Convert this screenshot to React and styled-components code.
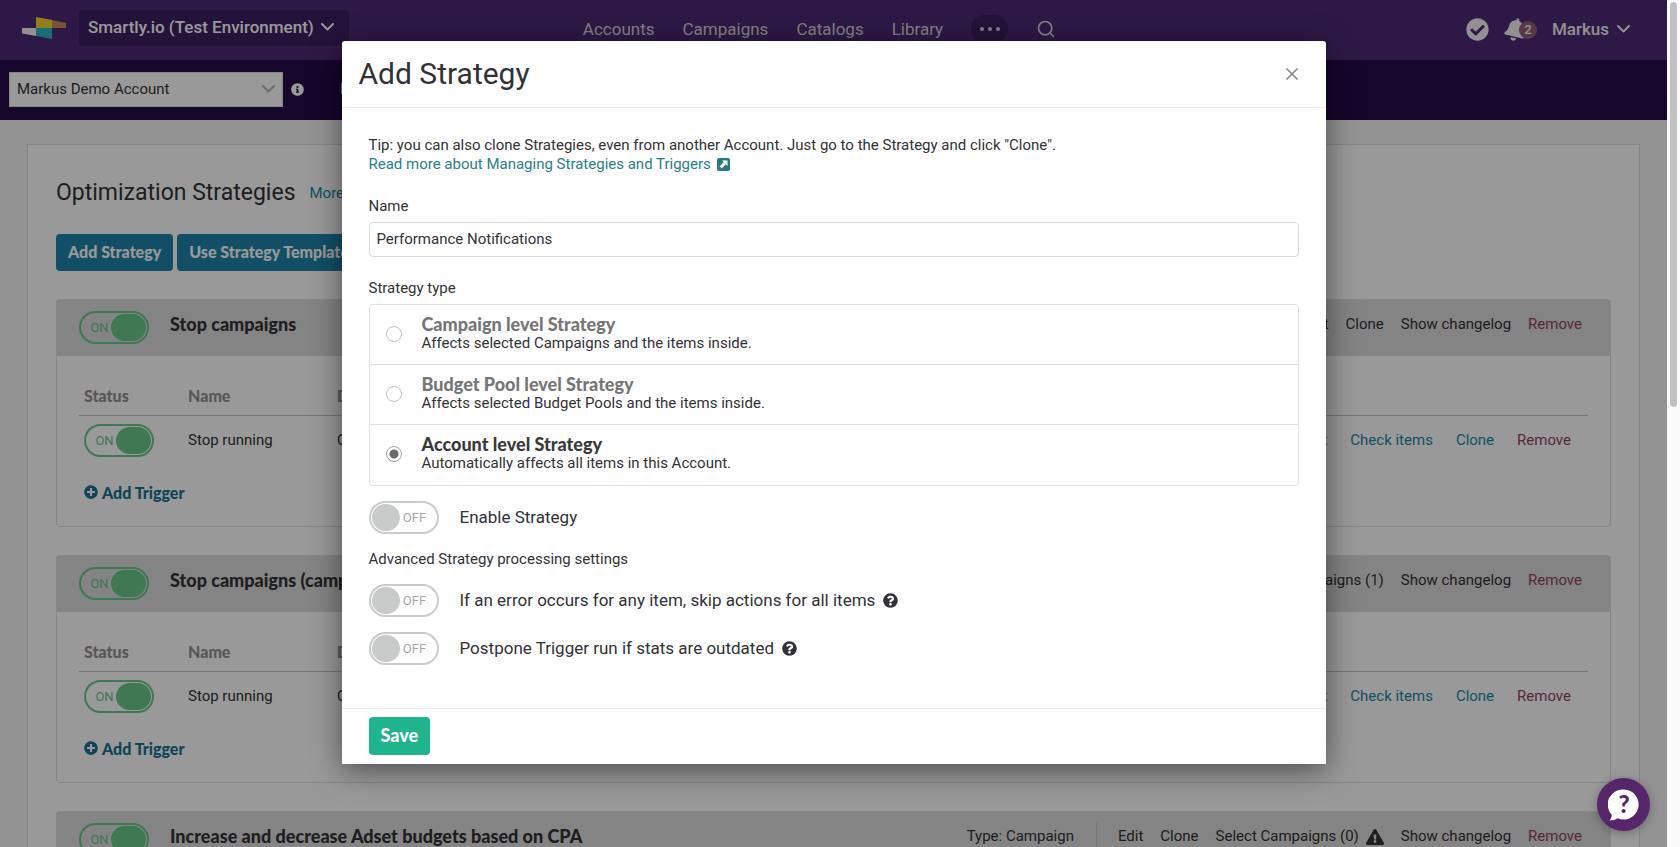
import React, { useState } from 'react';
import styled, { createGlobalStyle, css } from 'styled-components';
import {
  FaBell,
  FaCheckCircle,
  FaExclamationTriangle,
  FaInfoCircle,
  FaPlusCircle,
  FaQuestionCircle,
} from 'react-icons/fa';
import { Search, X } from 'lucide-react';

const color = {
  nav: '#4e2a75',
  navDeep: '#3c1e62',
  subnav: '#260a48',
  page: '#f5f5f5',
  text: '#323236',
  muted: '#948e95',
  teal: '#1787a6',
  tealDark: '#17728f',
  green: '#69c989',
  remove: '#93435f',
  line: '#dedede',
};

const body = "Roboto, 'Liberation Sans', sans-serif";
const strong = "Lato, Roboto, 'Liberation Sans', sans-serif";

const GlobalStyle = createGlobalStyle`
  *, *::before, *::after { box-sizing: border-box; }
  body {
    margin: 0;
    font-family: ${body};
    font-size: 15px;
    line-height: 19px;
    color: ${color.text};
  }
  button, input, select { font: inherit; color: inherit; }
  a { text-decoration: none; color: inherit; }
  h1, h2, h3, p { margin: 0; }
`;

const Shell = styled.div`
  display: flex;
  height: 100vh;
  overflow: hidden;
`;

const Viewport = styled.div`
  position: relative;
  flex: 1;
  min-width: 0;
  overflow: hidden;
  background: ${color.page};
`;

const ScrollTrack = styled.div`
  flex: none;
  width: 13px;
  padding: 2px 3px;
  background: #fafafa;
`;

const ScrollThumb = styled.div`
  width: 7px;
  height: 48%;
  border-radius: 4px;
  background: #c1c1c1;
`;

/* Top navigation */

const TopBar = styled.header`
  display: grid;
  grid-template-columns: 1fr auto 1fr;
  align-items: center;
  height: 60px;
  padding: 0 37px 4px 22px;
  background: ${color.nav};
  color: #fff;
  font-size: 17px;
  font-weight: 500;
`;

const Brand = styled.div`
  display: flex;
  align-items: center;
  gap: 13px;
`;

const EnvironmentButton = styled.button`
  display: flex;
  align-items: center;
  gap: 7px;
  height: 36px;
  padding: 0 15px 2px 9px;
  border: 0;
  border-radius: 2px;
  background: ${color.navDeep};
  white-space: nowrap;
`;

const MainNav = styled.nav`
  display: flex;
  align-items: center;
  gap: 28px;
  padding: 2px 13px 0 0;
  color: #dcd6e0;
  font-weight: 400;
`;

const MoreButton = styled.button`
  display: flex;
  align-items: center;
  justify-content: center;
  gap: 4px;
  width: 37px;
  height: 28px;
  padding: 0;
  border: 0;
  border-radius: 14px;
  background: ${color.navDeep};
`;

const Dot = styled.span`
  width: 4px;
  height: 4px;
  border-radius: 50%;
  background: #dcd6e0;
`;

const IconButton = styled.button`
  display: inline-flex;
  align-items: center;
  padding: 0;
  border: 0;
  background: none;
`;

const UserArea = styled.div`
  display: flex;
  align-items: center;
  justify-content: flex-end;
  gap: 15px;
  padding-top: 2px;
  color: #f4f0f6;
`;

const BellButton = styled(IconButton)`
  position: relative;
  width: 33px;

  svg { transform: rotate(14deg); }
`;

const Badge = styled.span`
  position: absolute;
  right: 0;
  top: 3px;
  width: 18px;
  height: 18px;
  border-radius: 50%;
  background: #8f5f72;
  font-size: 13px;
  line-height: 18px;
  text-align: center;
`;

const UserButton = styled(IconButton)`
  gap: 8px;
`;

const SubBar = styled.div`
  display: flex;
  align-items: center;
  height: 60px;
  padding: 0 9px 2px;
  gap: 8px;
  background: ${color.subnav};
  color: #fff;
`;

const SelectWrap = styled.div`
  display: grid;
  align-items: center;
  width: 274px;
  background: #fff;
  color: ${color.text};

  > * { grid-area: 1 / 1; }
  > svg { justify-self: end; margin-right: 8px; color: #b4b4b4; pointer-events: none; }
`;

const AccountSelect = styled.select`
  width: 100%;
  height: 35px;
  padding: 0 30px 0 7px;
  border: 1px solid ${color.line};
  border-radius: 0;
  background: transparent;
  appearance: none;
`;

const SubLink = styled.a`
  margin-left: 28px;
`;

/* Strategy list */

const Panel = styled.main`
  margin: 24px 27px;
  padding: 31px 28px;
  border: 1px solid ${color.line};
  background: #fff;
`;

const PageHeading = styled.div`
  display: flex;
  align-items: center;
  gap: 14px;
  height: 34px;
`;

const PageTitle = styled.h1`
  font-size: 23px;
  line-height: 34px;
  font-weight: 400;
`;

const Link = styled.a`
  color: ${(p) => (p.$danger ? color.remove : color.teal)};
`;

const ButtonRow = styled.div`
  display: flex;
  gap: 4px;
  margin: 24px 0 28px;
`;

const Button = styled.button`
  height: ${(p) => (p.$primary ? '38px' : '37px')};
  padding: 0 12px 2px;
  border: 0;
  border-radius: 4px;
  background: ${(p) => (p.$primary ? '#1fb48e' : '#1e84aa')};
  color: #fff;
  font-family: ${strong};
  font-size: ${(p) => (p.$primary ? '18px' : '16px')};
  font-weight: 900;
`;

const Card = styled.section`
  margin-bottom: 28px;
  border: 1px solid ${color.line};
  border-radius: 4px;
`;

const CardHeader = styled.header`
  display: flex;
  align-items: center;
  height: 56px;
  padding: 0 28px 2px 22px;
  background: #dcdcdc;
`;

const CardTitle = styled.h2`
  flex: 1;
  margin: 0 0 6px 21px;
  font-family: ${strong};
  font-size: 18px;
  font-weight: 900;
`;

const CardActions = styled.div`
  display: flex;
  align-items: center;
  gap: 17px;
  margin-bottom: 5px;
  white-space: nowrap;
`;

const StrategyScope = styled.span`
  padding: 5px 22px 5px 0;
  margin-right: 4px;
  border-right: 1px solid #c6c6c6;
`;

const ActionLink = styled.a`
  display: inline-flex;
  align-items: center;
  gap: 7px;
  color: ${(p) => (p.$danger ? color.remove : color.text)};
`;

const CardBody = styled.div`
  padding: 19px 22px;
`;

const TriggerTable = styled.table`
  width: 100%;
  border-collapse: collapse;
  table-layout: fixed;

  th, td { padding: 0 5px; text-align: left; }
  th {
    height: 40px;
    padding-top: 2px;
    border-bottom: 1px solid #c4c4c4;
    color: ${color.muted};
    font-family: ${strong};
    font-size: 16px;
    font-weight: 900;
  }
  td { height: 50px; }
`;

const Column = styled.col`
  width: ${(p) => p.$width};
`;

const RowActions = styled.div`
  display: flex;
  justify-content: flex-end;
  gap: 23px;
  padding-right: 12px;
`;

const AddTrigger = styled.button`
  display: flex;
  align-items: center;
  gap: 4px;
  height: 30px;
  margin: 12px 0 0 5px;
  padding: 0;
  border: 0;
  background: none;
  color: ${color.tealDark};
  font-family: ${strong};
  font-size: 16px;
  font-weight: 900;
`;

/* Switch */

const SwitchBox = styled.span`
  position: relative;
  display: inline-flex;
  align-items: center;
  flex: none;
  width: 70px;
  height: 33px;
  padding: 0 1px;
  border: 2px solid ${(p) => (p.$on ? color.green : '#c9cccc')};
  border-radius: 17px;
  background: ${(p) => (p.$on ? 'transparent' : '#fff')};
  color: ${(p) => (p.$on ? color.green : '#a6a9a9')};
  font-size: 13px;
  vertical-align: middle;
`;

const SwitchInput = styled.input`
  position: absolute;
  inset: 0;
  width: 100%;
  height: 100%;
  margin: 0;
  opacity: 0;
  cursor: pointer;
`;

const SwitchKnob = styled.span`
  height: 27px;
  border-radius: 14px;
  ${(p) =>
    p.$on
      ? css`
          order: 2;
          width: 35px;
          background: ${color.green};
        `
      : css`
          width: 28px;
          background: #c9cbcb;
        `}
`;

const SwitchText = styled.span`
  flex: 1;
  text-align: center;
  padding: ${(p) => (p.$on ? '0 0 0 6px' : '0 6px 0 0')};
`;

/* Modal */

const Overlay = styled.div`
  position: absolute;
  inset: 0;
  padding: 41px 20px;
  background: rgba(0, 0, 0, 0.4);
`;

const Dialog = styled.form`
  max-width: 984px;
  margin: 0 auto;
  border-radius: 3px 3px 0 0;
  background: #fff;
  box-shadow: 0 6px 30px rgba(0, 0, 0, 0.5);
`;

const DialogHeader = styled.header`
  display: flex;
  align-items: center;
  justify-content: space-between;
  height: 67px;
  padding: 0 24px 0 17px;
  border-bottom: 1px solid #ececec;

  button { color: #858585; }
`;

const DialogTitle = styled.h2`
  font-size: 30px;
  line-height: 36px;
  font-weight: 400;
`;

const DialogBody = styled.div`
  padding: 28px 27px 43px;
`;

const DocsLink = styled.a`
  display: inline-flex;
  align-items: center;
  gap: 6px;
  color: #2a8088;
`;

const Field = styled.div`
  display: flex;
  flex-direction: column;
  gap: 6px;
  margin-top: 23px;
`;

const TextInput = styled.input`
  height: 35px;
  padding: 0 7px 2px;
  border: 1px solid #d9dcdc;
  border-radius: 4px;
  background: #fff;
`;

const TypeGroup = styled.fieldset`
  margin: 22px 0 15px;
  padding: 0;
  border: 0;
`;

const TypeLegend = styled.legend`
  padding: 0;
  margin-bottom: 6px;
`;

const TypeList = styled.div`
  padding-bottom: 1px;
  border: 1px solid #e0e2e2;
  border-radius: 4px;
`;

const TypeOption = styled.label`
  display: flex;
  align-items: center;
  gap: 20px;
  padding: 10px 16px 11px;

  & + & { border-top: 1px solid #e0e2e2; }
`;

const Radio = styled.input`
  appearance: none;
  width: 16px;
  height: 16px;
  margin: 0;
  border: 1px solid #c2c2c2;
  border-radius: 50%;
  background: #fff;

  &:checked {
    border-color: #a5a5a5;
    background: radial-gradient(circle, #6b6b6b 0 4px, #fff 5px);
  }
`;

const TypeText = styled.span`
  display: flex;
  flex-direction: column;
`;

const TypeName = styled.strong`
  color: ${(p) => (p.$active ? '#3a3a3c' : '#767676')};
  font-family: ${strong};
  font-size: 18px;
  font-weight: 900;
`;

const SwitchRow = styled.div`
  display: flex;
  align-items: center;
  gap: 21px;
  margin-bottom: 15px;
  font-size: 17px;

  &:last-child { margin-bottom: 0; }
`;

const RowLabel = styled.span`
  display: inline-flex;
  align-items: center;
  gap: 8px;
`;

const SectionLabel = styled.h3`
  margin: 16px 0 15px;
  font-size: 15px;
  font-weight: 400;
`;

const DialogFooter = styled.footer`
  padding: 8px 27px 9px;
  border-top: 1px solid #ececec;
`;

const HelpButton = styled.button`
  position: absolute;
  right: 17px;
  bottom: 16px;
  display: grid;
  place-items: center;
  width: 53px;
  height: 53px;
  padding: 0;
  border: 0;
  border-radius: 50%;
  background: #56266a;
  box-shadow: 0 2px 10px rgba(0, 0, 0, 0.3);
`;

function Logo() {
  return (
    <svg width="44" height="24" viewBox="0 0 44 24" aria-label="Smartly.io">
      <path d="M14 1l16 3v8H14z" fill="#f3d433" />
      <path d="M30 4l14 3v5H30z" fill="#cf8a50" />
      <path d="M0 12h14v8L0 17.500z" fill="#f2f2f2" />
      <path d="M14 12h16v11l-16-3z" fill="#30b4c4" />
    </svg>
  );
}

function Chevron() {
  return (
    <svg width="13" height="8" viewBox="0 0 13 8" fill="none" aria-hidden="true">
      <path
        d="M1 1l5.500 5.500L12 1"
        stroke="currentColor"
        strokeWidth="2"
        strokeLinecap="round"
        strokeLinejoin="round"
      />
    </svg>
  );
}

function ExternalIcon() {
  return (
    <svg width="13" height="13" viewBox="0 0 13 13" aria-hidden="true">
      <rect width="13" height="13" rx="2" fill="#2a7a84" />
      <path d="M5 2.500h5.500v5.500L8.800 6.300 4.600 10.500 2.500 8.400l4.200-4.200z" fill="#fff" />
    </svg>
  );
}

function Switch({ label, id, defaultOn = false }) {
  const [on, setOn] = useState(defaultOn);
  return (
    <SwitchBox $on={on}>
      <SwitchKnob $on={on} />
      <SwitchText $on={on}>{on ? 'ON' : 'OFF'}</SwitchText>
      <SwitchInput
        id={id}
        type="checkbox"
        role="switch"
        aria-label={label}
        checked={on}
        onChange={(e) => setOn(e.target.checked)}
      />
    </SwitchBox>
  );
}

function StrategyCard({ title, scope, campaigns, warning }) {
  return (
    <Card>
      <CardHeader>
        <Switch label={title} defaultOn />
        <CardTitle>{title}</CardTitle>
        <CardActions>
          <StrategyScope>Type: {scope}</StrategyScope>
          <ActionLink href="#edit">Edit</ActionLink>
          <ActionLink href="#clone">Clone</ActionLink>
          {campaigns !== undefined && (
            <ActionLink href="#campaigns">
              Select Campaigns ({campaigns})
              {warning && <FaExclamationTriangle size={18} />}
            </ActionLink>
          )}
          <ActionLink href="#changelog">Show changelog</ActionLink>
          <ActionLink href="#remove" $danger>Remove</ActionLink>
        </CardActions>
      </CardHeader>
      <CardBody>
        <TriggerTable>
          <colgroup>
            <Column $width="104px" />
            <Column $width="149px" />
            <Column $width="auto" />
            <Column $width="360px" />
          </colgroup>
          <thead>
            <tr>
              <th>Status</th>
              <th>Name</th>
              <th>Description</th>
              <th aria-label="Actions" />
            </tr>
          </thead>
          <tbody>
            <tr>
              <td><Switch label="Stop running" defaultOn /></td>
              <td>Stop running</td>
              <td>Conditions</td>
              <td>
                <RowActions>
                  <Link href="#edit">Edit</Link>
                  <Link href="#check">Check items</Link>
                  <Link href="#clone">Clone</Link>
                  <Link href="#remove" $danger>Remove</Link>
                </RowActions>
              </td>
            </tr>
          </tbody>
        </TriggerTable>
        <AddTrigger type="button">
          <FaPlusCircle size={14} />
          Add Trigger
        </AddTrigger>
      </CardBody>
    </Card>
  );
}

const strategies = [
  { title: 'Stop campaigns', scope: 'Account' },
  { title: 'Stop campaigns (campaign level)', scope: 'Campaign', campaigns: 1 },
  {
    title: 'Increase and decrease Adset budgets based on CPA',
    scope: 'Campaign',
    campaigns: 0,
    warning: true,
  },
];

const strategyTypes = [
  { id: 'campaign', name: 'Campaign level Strategy', text: 'Affects selected Campaigns and the items inside.' },
  { id: 'pool', name: 'Budget Pool level Strategy', text: 'Affects selected Budget Pools and the items inside.' },
  { id: 'account', name: 'Account level Strategy', text: 'Automatically affects all items in this Account.' },
];

function AddStrategyDialog() {
  const [name, setName] = useState('Performance Notifications');
  const [type, setType] = useState('account');
  return (
    <Dialog role="dialog" aria-label="Add Strategy" onSubmit={(e) => e.preventDefault()}>
      <DialogHeader>
        <DialogTitle>Add Strategy</DialogTitle>
        <IconButton type="button" aria-label="Close">
          <X size={20} strokeWidth={2} />
        </IconButton>
      </DialogHeader>
      <DialogBody>
        <p>
          Tip: you can also clone Strategies, even from another Account. Just go to the Strategy
          and click "Clone".
        </p>
        <DocsLink href="#docs">
          Read more about Managing Strategies and Triggers
          <ExternalIcon />
        </DocsLink>
        <Field>
          <label htmlFor="strategy-name">Name</label>
          <TextInput id="strategy-name" value={name} onChange={(e) => setName(e.target.value)} />
        </Field>
        <TypeGroup>
          <TypeLegend>Strategy type</TypeLegend>
          <TypeList>
            {strategyTypes.map((option) => (
              <TypeOption key={option.id}>
                <Radio
                  type="radio"
                  name="strategy-type"
                  checked={type === option.id}
                  onChange={() => setType(option.id)}
                />
                <TypeText>
                  <TypeName $active={type === option.id}>{option.name}</TypeName>
                  {option.text}
                </TypeText>
              </TypeOption>
            ))}
          </TypeList>
        </TypeGroup>
        <SwitchRow>
          <Switch id="enable-strategy" />
          <label htmlFor="enable-strategy">Enable Strategy</label>
        </SwitchRow>
        <SectionLabel>Advanced Strategy processing settings</SectionLabel>
        <SwitchRow>
          <Switch id="skip-actions" />
          <RowLabel>
            <label htmlFor="skip-actions">
              If an error occurs for any item, skip actions for all items
            </label>
            <FaQuestionCircle size={15} />
          </RowLabel>
        </SwitchRow>
        <SwitchRow>
          <Switch id="postpone-run" />
          <RowLabel>
            <label htmlFor="postpone-run">Postpone Trigger run if stats are outdated</label>
            <FaQuestionCircle size={15} />
          </RowLabel>
        </SwitchRow>
      </DialogBody>
      <DialogFooter>
        <Button type="submit" $primary>Save</Button>
      </DialogFooter>
    </Dialog>
  );
}

export default function App() {
  return (
    <Shell>
      <GlobalStyle />
      <Viewport>
        <TopBar>
          <Brand>
            <Logo />
            <EnvironmentButton type="button">
              Smartly.io (Test Environment)
              <Chevron />
            </EnvironmentButton>
          </Brand>
          <MainNav>
            <a href="#accounts">Accounts</a>
            <a href="#campaigns">Campaigns</a>
            <a href="#catalogs">Catalogs</a>
            <a href="#library">Library</a>
            <MoreButton type="button" aria-label="More">
              <Dot />
              <Dot />
              <Dot />
            </MoreButton>
            <IconButton type="button" aria-label="Search">
              <Search size={20} />
            </IconButton>
          </MainNav>
          <UserArea>
            <FaCheckCircle size={23} />
            <BellButton type="button" aria-label="Notifications">
              <FaBell size={23} />
              <Badge>2</Badge>
            </BellButton>
            <UserButton type="button">
              Markus
              <Chevron />
            </UserButton>
          </UserArea>
        </TopBar>
        <SubBar>
          <SelectWrap>
            <AccountSelect aria-label="Account">
              <option>Markus Demo Account</option>
            </AccountSelect>
            <Chevron />
          </SelectWrap>
          <FaInfoCircle size={13} />
          <SubLink href="#performance">Performance</SubLink>
        </SubBar>
        <Panel>
          <PageHeading>
            <PageTitle>Optimization Strategies</PageTitle>
            <Link href="#more">More information</Link>
          </PageHeading>
          <ButtonRow>
            <Button type="button">Add Strategy</Button>
            <Button type="button">Use Strategy Template</Button>
          </ButtonRow>
          {strategies.map((strategy) => (
            <StrategyCard key={strategy.title} {...strategy} />
          ))}
        </Panel>
        <Overlay>
          <AddStrategyDialog />
        </Overlay>
        <HelpButton type="button" aria-label="Help">
          <svg width="32" height="34" viewBox="0 0 32 34" aria-hidden="true">
            <path
              d="M16 1.500a15 15 0 1 1-6.500 28.700c-1.800 1.300-4.600 2.300-8 2.300 1.500-1.600 2.200-3.600 2.300-5.700A15 15 0 0 1 16 1.500z"
              fill="#fff"
            />
            <text
              x="16"
              y="25"
              textAnchor="middle"
              fontFamily={strong}
              fontSize="24"
              fontWeight="900"
              fill="#56266a"
            >
              ?
            </text>
          </svg>
        </HelpButton>
      </Viewport>
      <ScrollTrack>
        <ScrollThumb />
      </ScrollTrack>
    </Shell>
  );
}
